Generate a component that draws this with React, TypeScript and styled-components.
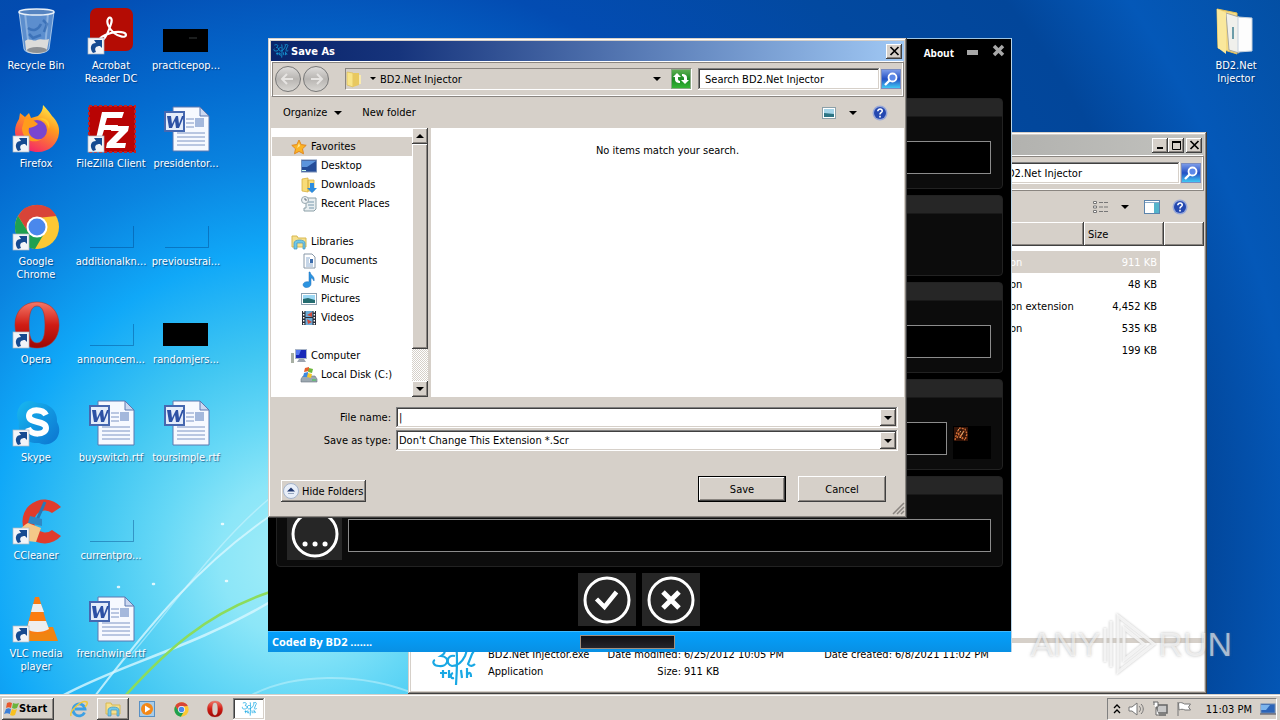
import React from "react";
import styled, { createGlobalStyle, css } from "styled-components";

const face = "#d6d0c9";
const ui = '"DejaVu Sans Condensed", "DejaVu Sans", sans-serif';

const GlobalStyle = createGlobalStyle`
  *, *::before, *::after { box-sizing: border-box; }
  body { margin: 0; font: 11px/13px ${ui}; color: #000; overflow: hidden; }
  button, input, select { font: inherit; color: inherit; margin: 0; padding: 0; border: 0; border-radius: 0; outline: 0; background: none; }
  ul { list-style: none; margin: 0; padding: 0; }
  svg { display: block; flex: none; }
`;

const raised = css`
  background: ${face};
  box-shadow: inset -1px -1px #404040, inset 1px 1px #fff, inset -2px -2px #8a8580;
`;
const sunken = css`
  box-shadow: inset -1px -1px #fff, inset 1px 1px #808080, inset -2px -2px ${face}, inset 2px 2px #404040;
`;

/* ---------- desktop ---------- */

const Screen = styled.div`
  display: flex;
  flex-direction: column;
  min-height: 100vh;
  background: #0450a8;
`;
const Workspace = styled.main`
  position: relative;
  flex: 1;
  display: flex;
  justify-content: space-between;
  align-items: flex-start;
  padding: 8px 8px 0 0;
  overflow: hidden;
  background: radial-gradient(circle at 300px 560px, #a4eef8 0, #8ce6f8 80px, #66d8f6 140px, #40c6f2 210px, #10a8f8 310px, #0a84e0 400px, #046cd0 480px, #034cb2 600px, #0249a0 760px, #02469a 900px, #0458b8 1000px, #034c9c 1180px);
`;
const Streaks = styled.svg`
  position: absolute;
  left: 0;
  bottom: 0;
`;
const IconGrid = styled.div`
  position: relative;
  display: grid;
  grid-template-columns: repeat(3, 72px);
  grid-template-rows: repeat(7, 98px);
  grid-auto-flow: column;
  column-gap: 3px;
`;
const Shortcut = styled.button`
  display: flex;
  flex-direction: column;
  align-items: center;
  gap: 3px;
  width: 72px;
  height: 98px;
  color: #fff;
  text-shadow: 1px 1px 1px rgba(0, 30, 80, 0.6);
  white-space: nowrap;
`;
const ShortcutLabel = styled.span`
  white-space: pre;
  text-align: center;
`;

/* ---------- window parts ---------- */

const Frame = styled.section`
  position: absolute;
  display: flex;
  flex-direction: column;
  padding: 3px;
  background: ${face};
  box-shadow: inset -1px -1px #404040, inset 1px 1px ${face}, inset -2px -2px #8a8580, inset 2px 2px #fff;
`;
const ExplorerFrame = styled(Frame)`
  left: 408px;
  right: 73px;
  top: 132px;
  bottom: 0;
`;
const DialogFrame = styled(Frame)`
  left: 268px;
  top: 38px;
  width: 639px;
`;
const TitleBar = styled.header<{ $active?: boolean }>`
  display: flex;
  align-items: center;
  justify-content: flex-end;
  height: 20px;
  padding: 0 2px;
  color: #fff;
  font-weight: bold;
  background: ${(p) => (p.$active ? "linear-gradient(90deg, #0a246a, #16347c 20%, #a0c8f4)" : "linear-gradient(90deg, #808080, #c2c2be)")};
`;
const TitleText = styled.h1`
  flex: 1;
  margin: 0 0 0 2px;
  font: bold 11px/13px ${ui};
`;
const CaptionButton = styled.button<{ $gap?: boolean }>`
  ${raised}
  display: grid;
  place-items: center;
  width: 16px;
  height: 15px;
  margin-left: ${(p) => (p.$gap ? "2px" : "0")};
`;
const NavBar = styled.div`
  display: flex;
  align-items: center;
  height: 36px;
  padding: 0 2px 0 3px;
  border: 1px solid #8a8580;
  border-top-color: #fff;
  border-left-color: #fff;
  box-shadow: inset 1px 1px #8a8580, inset -1px -1px #fff;
`;
const NavPair = styled.div`
  display: flex;
  gap: 2px;
  margin-right: 16px;
`;
const RoundNav = styled.button`
  display: grid;
  place-items: center;
  width: 26px;
  height: 26px;
  border: 1px solid #777;
  border-radius: 50%;
  background: linear-gradient(#dedcda, #b8b5b2 50%, #d8d6d2);
`;
const Address = styled.div`
  flex: 1;
  display: flex;
  align-items: center;
  height: 22px;
  border: 1px solid #fff;
  border-top-color: #8a8580;
  border-left-color: #8a8580;
`;
const AddressText = styled.span`
  flex: 1;
  margin-left: 4px;
`;
const SquareButton = styled.button<{ $green?: boolean }>`
  display: grid;
  place-items: center;
  width: 20px;
  height: 20px;
  border: 1px solid ${(p) => (p.$green ? "#8aa884" : "#7a8cc0")};
  background: ${(p) =>
    p.$green ? "linear-gradient(#5cae50, #1c8c24 50%, #34b434)" : "linear-gradient(#7a9ae8, #2450c4 50%, #40c8f4)"};
`;
const Search = styled.input`
  ${sunken}
  height: 22px;
  width: ${(p) => (p.width ? p.width + "px" : "182px")};
  margin: 0 1px 0 6px;
  padding: 0 7px;
  background: #fff;
  &::placeholder { color: #000; opacity: 1; }
`;
const ToolBar = styled.div`
  display: flex;
  align-items: center;
  height: 31px;
  padding: 0 16px 0 12px;
`;
const ToolButton = styled.button<{ $left?: number }>`
  display: flex;
  align-items: center;
  gap: 7px;
  margin-left: ${(p) => p.$left ?? 0}px;
`;
const Spacer = styled.span`
  flex: 1;
`;

/* ---------- save dialog ---------- */

const Panes = styled.div`
  display: flex;
  height: 269px;
`;
const TreePane = styled.nav`
  width: 141px;
  padding-top: 9px;
  background: #fff;
`;
const TreeRow = styled.li<{ $child?: boolean; $selected?: boolean; $first?: boolean }>`
  margin: ${(p) => (p.$first ? "19px 0 0 1px" : "0 0 0 1px")};
  background: ${(p) => (p.$selected ? face : "none")};
  button {
    display: flex;
    align-items: center;
    gap: 4px;
    height: 19px;
    padding-left: ${(p) => (p.$child ? "29px" : "19px")};
  }
`;
const ScrollBar = styled.div`
  display: flex;
  flex-direction: column;
  width: 16px;
  background: repeating-conic-gradient(#fff 0 25%, ${face} 0 50%) 0 0 / 2px 2px;
`;
const ScrollButton = styled.button`
  ${raised}
  display: grid;
  place-items: center;
  width: 16px;
  height: 16px;
`;
const Thumb = styled.div`
  ${raised}
  height: 205px;
  margin-bottom: auto;
`;
const FilePane = styled.div`
  flex: 1;
  margin-left: 3px;
  padding-top: 16px;
  text-align: center;
  background: #fff;
`;
const Form = styled.form`
  display: flex;
  flex-direction: column;
  gap: 2px;
  padding: 10px 6px 0 0;
`;
const Field = styled.div`
  display: grid;
  grid-template-columns: 120px 1fr;
  column-gap: 5px;
  align-items: center;
  label { text-align: right; }
`;
const Combo = styled.div`
  ${sunken}
  position: relative;
  display: flex;
  height: 21px;
  padding: 2px;
  background: #fff;
  input, select {
    flex: 1;
    min-width: 0;
    padding-left: 1px;
    appearance: none;
  }
`;
const ComboArrow = styled.span`
  ${raised}
  display: grid;
  place-items: center;
  width: 16px;
  pointer-events: none;
`;
const Actions = styled.div`
  display: flex;
  align-items: flex-end;
  gap: 12px;
  padding: 23px 12px 0 10px;
`;
const HideButton = styled.button`
  ${raised}
  display: flex;
  align-items: center;
  gap: 3px;
  height: 22px;
  padding: 0 3px 0 2px;
`;
const PushButton = styled.button<{ $primary?: boolean }>`
  ${raised}
  width: 88px;
  height: 26px;
  border: ${(p) => (p.$primary ? "1px solid #000" : "0")};
`;
const Grip = styled.div`
  display: flex;
  justify-content: flex-end;
`;

/* ---------- injector window ---------- */

const Injector = styled.section`
  position: absolute;
  left: 268px;
  top: 38px;
  width: 744px;
  display: flex;
  flex-direction: column;
  background: #000;
  border-top: 1px solid #9cc4e4;
  border-right: 1px solid #b8d4e8;
`;
const InjectorTop = styled.header`
  display: flex;
  justify-content: flex-end;
  align-items: flex-start;
  gap: 13px;
  height: 59px;
  padding: 6px 5px 0;
  color: #fff;
`;
const AboutLink = styled.a`
  margin-top: 1px;
  color: #fff;
  font: bold 10px/14px "Open Sans", sans-serif;
  text-decoration: none;
`;
const Groups = styled.div`
  display: flex;
  flex-direction: column;
  gap: 6px;
  padding: 0 8px;
`;
const Group = styled.div<{ $short?: boolean }>`
  height: ${(p) => (p.$short ? 81 : 91)}px;
  border: 1px solid #222;
  border-radius: 4px;
  background: linear-gradient(#262626 17px, #0c0c0c 18px);
  overflow: hidden;
`;
const GroupRow = styled.div`
  display: flex;
  gap: 6px;
  margin: 30px 11px 0 10px;
`;
const TileButton = styled.button<{ $wide?: boolean }>`
  display: grid;
  place-items: center;
  width: ${(p) => (p.$wide ? 58 : 55)}px;
  height: 53px;
  background: #262626;
`;
const DarkInput = styled.input`
  flex: 1;
  height: 33px;
  margin-top: 12px;
  border: 1px solid #8c8c8c;
  background: #000;
  color: #fff;
`;
const Preview = styled.div`
  width: 38px;
  height: 33px;
  margin-top: 16px;
  background: #000;
`;
const Confirm = styled.div`
  display: flex;
  justify-content: center;
  gap: 6px;
  padding: 6px 2px 5px 0;
`;
const StatusBar = styled.footer`
  position: relative;
  display: grid;
  grid-template-columns: 1fr 95px 1fr;
  align-items: center;
  height: 21px;
  padding: 0 28px 0 4px;
  border-top: 1px solid #40b8fc;
  background: linear-gradient(#04a0fc, #0890e4);
  color: #fff;
  font: bold 11px/16px "Open Sans", sans-serif;
`;
const Progress = styled.div`
  height: 14px;
  border: 1px solid #a09080;
  background: linear-gradient(#101012, #26242a);
`;

/* ---------- explorer window ---------- */

const FileArea = styled.div`
  flex: 1;
  background: #fff;
`;
const Files = styled.table`
  width: 100%;
  border-collapse: separate;
  border-spacing: 0;
  table-layout: fixed;
  th {
    height: 24px;
    padding: 0 4px;
    text-align: left;
    font-weight: normal;
    ${raised}
  }
  td { height: 22px; padding: 0 3px; white-space: nowrap; }
  tbody::before { content: ""; display: block; height: 5px; }
`;
const FileRow = styled.tr<{ $selected?: boolean }>`
  color: ${(p) => (p.$selected ? "#fff" : "#000")};
  td:not(:last-child) { background: ${(p) => (p.$selected ? face : "none")}; background-clip: padding-box; }
  td:nth-child(3) { text-align: right; border-right: 4px solid transparent; }
`;
const Details = styled.div`
  display: flex;
  align-items: flex-start;
  gap: 11px;
  height: 53px;
  padding: 3px 0 0 20px;
  border-top: 5px solid ${face};
  background: #fff;
`;
const DetailGrid = styled.div`
  display: grid;
  grid-template-columns: 117px 79px 131px 80px auto;
  line-height: 17px;
  white-space: nowrap;
`;
const Caption = styled.span`
  padding-right: 3px;
  text-align: right;
`;

/* ---------- watermark and task bar ---------- */

const Watermark = styled.div`
  position: absolute;
  right: 48px;
  bottom: 18px;
  display: flex;
  align-items: center;
  color: rgba(255, 255, 255, 0.6);
  font: 34px/64px "Liberation Sans Narrow", "Liberation Sans", sans-serif;
  text-shadow: 0 0 3px rgba(120, 120, 120, 0.5);
`;
const TaskBar = styled.footer`
  display: flex;
  align-items: center;
  height: 28px;
  padding: 2px 3px 0 2px;
  background: ${face};
  box-shadow: inset 0 1px ${face}, inset 0 2px #fff;
`;
const StartButton = styled.button`
  ${raised}
  display: flex;
  align-items: center;
  width: 52px;
  height: 22px;
  padding-left: 2px;
  font: bold 11px/16px ${ui};
`;
const Launchers = styled.div`
  display: flex;
  align-items: center;
  gap: 2px;
  margin-left: 9px;
`;
const TaskButton = styled.button<{ $state?: "open" | "active" }>`
  display: grid;
  place-items: center;
  width: 32px;
  height: 22px;
  ${(p) => p.$state === "open" && raised}
  ${(p) => p.$state === "active" && css`background: #fff; ${sunken}`}
`;
const Tray = styled.div`
  display: flex;
  align-items: center;
  gap: 8px;
  height: 22px;
  margin-left: auto;
  padding: 0 0 0 6px;
  border: 1px solid #fff;
  border-top-color: #808080;
  border-left-color: #808080;
`;
const Clock = styled.time`
  margin: 0 0 0 6px;
`;

/* ---------- drawings ---------- */

const Svg = ({ s = 16, w, h, vb, children }: { s?: number; w?: number; h?: number; vb?: string; children: React.ReactNode }) => (
  <svg width={w ?? s} height={h ?? s} viewBox={vb ?? `0 0 ${w ?? s} ${h ?? s}`} overflow="visible" aria-hidden="true">
    {children}
  </svg>
);

const Down = () => <Svg w={8} h={4}><path d="M0 0h8L4 4z" /></Svg>;
const Cross = () => <Svg w={9} h={8}><path d="M.5 0l8 8M8.500 0l-8 8" stroke="#000" strokeWidth="1.700" /></Svg>;

const Arrow = () => (
  <g>
    <rect x="1" y="30" width="16" height="16" fill="#f2f4f8" stroke="#b0b8c4" strokeWidth=".7" />
    <path d="M6 45c-4-5-2-10 3-10l-2-3h8v8l-2-2c-4 0-6 2-4 6z" fill="#164a90" />
  </g>
);

const RecycleBin = () => (
  <Svg s={48}>
    <path d="M7 4l5 37c1 6 23 6 25 0l5-37z" fill="#7fa8d8" fillOpacity=".72" stroke="#d4e6f6" strokeWidth=".7" />
    <path d="M13 5l4 36M36 5l-3 36" stroke="#d0e4f8" strokeWidth="2" opacity=".4" />
    <path d="M16 20c5 4 10 2 13-4M31 12l4 4-3 8M17 26l4 4 8-3" fill="none" stroke="#2860ac" strokeWidth="2.500" opacity=".6" />
    <path d="M13 33c5-4 8 1 12-1s8 1 12-1l-2 11c-3 5-19 5-21 0z" fill="#dcdcda" />
    <ellipse cx="25" cy="42" rx="10" ry="3" fill="#8c9094" />
    <ellipse cx="24.500" cy="4" rx="17.500" ry="3" fill="#5684c0" stroke="#e8f0f8" strokeWidth="1.500" />
  </Svg>
);
const Acrobat = () => (
  <Svg s={48}>
    <rect x="3" y="0" width="43" height="43" rx="7" fill="#b40c04" />
    <path d="M13 33c-2-3 4-6 11-8 7-2 15-1 15 2s-7 2-12-2-8-11-6-14 5-1 3 5-6 18-11 17z" fill="none" stroke="#fff" strokeWidth="2.200" />
    <Arrow />
  </Svg>
);
const Firefox = () => (
  <Svg s={48}>
    <defs>
      <linearGradient id="ff" x1=".8" y1="0" x2=".3" y2="1">
        <stop offset="0" stopColor="#fff04c" /><stop offset=".4" stopColor="#ff9a20" /><stop offset="1" stopColor="#f4206c" />
      </linearGradient>
    </defs>
    <path d="M31-1c5 5 7 8 9 11 4 4 8 10 7 17-1 11-10 19-21 19C13 46 3 37 3 25c0-5 2-9 4-12l1-6 5 4 4-4 2 5 7-2c3-3 5-6 5-11z" fill="url(#ff)" />
    <circle cx="25" cy="24" r="10" fill="#7846d0" />
    <path d="M13 12l8 2 5 4c-3 3-6 3-9 4-2 8 6 13 13 11-9 6-20 0-20-11z" fill="#ff9c1c" />
    <path d="M26 13c6 0 10 4 11 10 2-7-3-13-11-10z" fill="#ffc82c" />
    <Arrow />
  </Svg>
);
const FileZilla = () => (
  <Svg s={48}>
    <rect x="2" y="0" width="46" height="46" fill="#b80404" stroke="#c42020" strokeWidth="2" strokeDasharray="3 2" />
    <path d="M15 6h22l-2 6H20l-2 7h13l-1 5H17l-4 13H8z" fill="#fff" />
    <path d="M25 20h17l-1 5-12 12h10l-1 5H19l1-5 12-12h-8z" fill="#fff" />
    <Arrow />
  </Svg>
);
const ChromeMark = () => (
  <g>
    <circle cx="25" cy="23" r="22" fill="#fcc834" />
    <path d="M6 12a22 22 0 0 1 38.500 0L25 14l-9 14z" fill="#d84438" />
    <path d="M6 12a22 22 0 0 0 17 33l10-17-17 0z" fill="#1ea050" />
    <circle cx="25" cy="23" r="10.500" fill="#fff" />
    <circle cx="25" cy="23" r="8.500" fill="#4a88ec" />
  </g>
);
const OperaMark = () => (
  <g>
    <defs>
      <linearGradient id="op" x1="0" y1="0" x2="0" y2="1">
        <stop offset="0" stopColor="#f47868" /><stop offset=".5" stopColor="#d01c14" /><stop offset="1" stopColor="#9c0804" />
      </linearGradient>
    </defs>
    <path fillRule="evenodd" d="M25 0c13 0 22 9 22 23S38 46 25 46 3 37 3 23 12 0 25 0zm0 4c-6 0-8 8-8 19s2 18 8 18 8-7 8-18-2-19-8-19z" fill="url(#op)" stroke="#b03028" strokeWidth=".6" />
  </g>
);
const Skype = () => (
  <Svg s={48}>
    <defs>
      <linearGradient id="sk" x1="0" y1="0" x2="1" y2="1"><stop offset="0" stopColor="#18b8f0" /><stop offset="1" stopColor="#0c74d0" /></linearGradient>
    </defs>
    <path d="M17 1c5 0 7 2 10 2 11 0 19 9 18 19 3 5 3 11 0 16-4 6-12 8-18 5C14 44 5 35 7 22 2 13 8 1 17 1z" fill="url(#sk)" />
    <path d="M34 15c-3-6-17-7-17 1s17 4 17 12c0 7-15 8-18 0" fill="none" stroke="#fff" strokeWidth="6" />
    <Arrow />
  </Svg>
);
const CCleaner = () => (
  <Svg s={48}>
    <path d="M49 9A22 22 0 1 0 49 38l-9-6a11 11 0 1 1 0-17z" fill="#e03c2c" />
    <path d="M33 4l-8 18" stroke="#2878b4" strokeWidth="3" />
    <path d="M18 18l12 3v7l-14-3z" fill="#2f88c4" />
    <path d="M16 25l13 5-5 14-17-2C2 42 6 30 16 25z" fill="#f4c888" />
    <Arrow />
  </Svg>
);
const Vlc = () => (
  <Svg s={48}>
    <path d="M13 31h28l5 14H8z" fill="#f08410" />
    <path d="M23 1h4l10 34c-5 4-19 4-23 0z" fill="#fb7c10" />
    <path d="M21 8h8l3 8H19zM17 25h17l3 8c-6 4-17 4-22 0z" fill="#eee" />
    <Arrow />
  </Svg>
);
const Chrome = () => <Svg s={48}><ChromeMark /><Arrow /></Svg>;
const Opera = () => <Svg s={48}><OperaMark /><Arrow /></Svg>;
const WordDoc = () => (
  <Svg s={48}>
    <path d="M11 1h27l9 9v35H11z" fill="#f6f9ff" stroke="#5c78b0" />
    <path d="M38 1v9h9z" fill="#ccd8f0" stroke="#5c78b0" />
    <path d="M24 13h8M24 17h8M24 21h8M15 27h28M15 31h28M15 35h28M15 39h28" stroke="#7c94c4" />
    <rect x="33" y="12" width="9" height="9" fill="#a4b8dc" />
    <rect x="3" y="6" width="19" height="19" fill="#e4ecfa" stroke="#4668b0" strokeWidth="2" />
    <path d="M5 10h4l1 8 4-8h2l1 8 3-8h2l-5 12h-3l-1-7-3 7H7z" fill="#2c50a4" />
  </Svg>
);
const BlackThumb = ({ mark }: { mark?: boolean }) => (
  <Svg s={48}><rect x="1" y="21" width="45" height="23" fill="#000" />{mark && <path d="M27 30h8" stroke="#383c3c" />}</Svg>
);
const ClearThumb = () => <Svg s={48}><path d="M3 43.500h43.500V22" fill="none" stroke="#003c80" strokeOpacity=".4" /></Svg>;
const OpenFolder = () => (
  <Svg s={48}>
    <path d="M5 1l20 4v41L6 40z" fill="#f6dc84" stroke="#e4c058" />
    <path d="M14 5l13 4v36l-10-3z" fill="#f0f0ec" stroke="#a8a8a0" />
    <path d="M26 9l14 1v33l-14 1z" fill="#fdfdfd" stroke="#c4d0dc" />
    <path d="M21 19v12" stroke="#6c9ca8" strokeWidth="2" />
    <path d="M5 1l9 4v41L6 40z" fill="#fae89c" />
  </Svg>
);
const Scribble = ({ w = 46, h = 40 }: { w?: number; h?: number }) => (
  <Svg w={w} h={h} vb="0 0 46 40">
    <path d="M4 3c10-4 13 3 6 7 10 1 7 11-2 10-6 0-7-5-4-6M25 1c2 8 1 20 0 38M24 10c-9-2-9 9-3 10 5 0 10-4 13-10 2-5 2-8 0-9M35 3c6-4 10 0 6 5l-4 10c2 3 5 2 7 0M12 24v8M9 27h7M18 24v8M22 27c-3 1-3 6 1 5M30 24l1 8M36 22v10M36 29c2-3 4-3 4 2" fill="none" stroke="#18a8e4" strokeWidth="2.200" />
  </Svg>
);

const Star = () => <Svg><path d="M8 1l2.200 4.600 5 .7-3.700 3.500 1 5L8 12.400l-4.500 2.400 1-5L.8 6.300l5-.7z" fill="#fcb424" stroke="#e08820" /><path d="M8 4l1 3-3 2z" fill="#ffe898" /></Svg>;
const DesktopIcon = () => <Svg><rect x=".5" y="2" width="15" height="12" fill="#244c98" stroke="#7890b8" /><path d="M1 3h14l-9 6H1z" fill="#5c94dc" /><path d="M1 12.500h4" stroke="#cfe" /></Svg>;
const DownloadIcon = () => <Svg><path d="M1 2l6-1v14l-6-1zM7 3h6v11H7z" fill="#f8dc78" stroke="#d8b040" strokeWidth=".8" /><path d="M9 6h4v5h3l-5 5-5-5h3z" fill="#2c8ce0" /></Svg>;
const RecentIcon = () => <Svg><path d="M5 2h10v11l-2 2H3v-3h2z" fill="#e8eef0" stroke="#8ca0a8" /><path d="M7 6h6M7 9h6M8 12h5" stroke="#7898ac" /><circle cx="4" cy="4" r="3.500" fill="#eef2f4" stroke="#98a8b0" /><path d="M4 2v2h2" stroke="#456" fill="none" strokeWidth=".8" /></Svg>;
const LibraryIcon = () => <Svg><path d="M1 2h5l1 2h8v9H1z" fill="#f6e08c" stroke="#d8b850" /><path d="M3 15V9c0-4 11-4 11 0v6h-2V9H6v6z" fill="#70c8e8" stroke="#4494bc" strokeWidth=".7" /></Svg>;
const DocIcon = () => <Svg><path d="M3 1h8l3 3v11H3z" fill="#fff" stroke="#8898a8" /><path d="M5 5h4M5 7h3M5 9h3M5 11h7M5 13h7" stroke="#8cacd0" /><path d="M9 6h3v4H9z" fill="#3c6cac" /></Svg>;
const MusicIcon = () => <Svg><path d="M9 0c1 4 5 4 4 9-1-2-2-3-3-3v6c0 4-7 5-8 1 0-3 4-4 6-3V0z" fill="#2c94e0" stroke="#1c6cb8" strokeWidth=".5" /></Svg>;
const PictureIcon = () => <Svg><rect x=".5" y="2.500" width="15" height="11" fill="#fff" stroke="#8ca0b0" /><path d="M2 4h12v8H2z" fill="#9cd8f4" /><path d="M2 8l5-1 7 2v3H2z" fill="#246c70" /></Svg>;
const VideoIcon = () => <Svg><rect x="1" y="1" width="14" height="14" fill="#282c38" /><path d="M4.500 1h7v6h-7zM4.500 8h7v7h-7z" fill="#6cacd8" /><path d="M11 2l-5 3 5 2zM6 9l5 3-4 2z" fill="#d04c3c" /><path d="M2.700 1v14M13.300 1v14" stroke="#fff" strokeWidth="1.400" strokeDasharray="1.500 1.500" /></Svg>;
const ComputerIcon = () => <Svg><path d="M0 5h3v10H0z" fill="#a8b0a4" /><rect x="4.500" y="1.500" width="11" height="9" fill="#1828b8" stroke="#a8b4c8" /><path d="M5 2h5l-2 5H5z" fill="#5478f0" /><path d="M8 11h5l2 3H6z" fill="#9ca4b0" /></Svg>;
const DiskIcon = () => <Svg><path d="M2 9h12l2 3v3H0v-3z" fill="#9ca8b0" stroke="#687480" strokeWidth=".6" /><path d="M4 1l4-1v4L3 5z" fill="#e8602c" /><path d="M8 1l4 1-1 4-4-1z" fill="#70b83c" /><path d="M3 6l4-1v5H2z" fill="#3c88e0" /><path d="M7 6l4 1-1 4-4-1z" fill="#f8c828" /><path d="M11 13h4" stroke="#38d048" /></Svg>;

const Magnifier = () => <Svg><circle cx="9.500" cy="6.500" r="4" fill="#5c88e8" stroke="#fff" strokeWidth="1.800" /><path d="M6.500 9.500L2 14" stroke="#fff" strokeWidth="2.400" /></Svg>;
const Refresh = () => (
  <Svg>
    <path d="M0 6l4-4 4 4H5v2c0 1 1 2 2 2v2c-3 0-5-1-5-4V6z" fill="#fff" />
    <path d="M16 9l-4 4-4-4h3V7c0-1-1-2-2-2V3c3 0 5 1 5 4v2z" fill="#fff" />
  </Svg>
);
const Help = () => (
  <Svg>
    <circle cx="8" cy="8" r="7.500" fill="#98a8d8" />
    <circle cx="8" cy="8" r="6" fill="#2448b0" />
    <path d="M5.800 6.200c0-3 4.800-2.800 4.400 0-.3 1.600-2.200 1.500-2.200 3.200M8 10.800v1.700" fill="none" stroke="#fff" strokeWidth="1.600" />
  </Svg>
);
const ViewIcon = () => <Svg w={14} h={16}><rect x=".5" y="2.500" width="13" height="11" fill="#fff" stroke="#8ca0a8" /><path d="M2 4h10v8H2z" fill="#a4d4e8" /><path d="M2 8l10 1v3H2z" fill="#2c7484" /></Svg>;
const ListIcon = () => <Svg><path d="M.5 2.500h3v2h-3zM.5 7h3v2h-3zM.5 11.500h3v2h-3z" fill="#fff" stroke="#777" /><path d="M6 3.500h9M6 8h9M6 12.500h9" stroke="#777" strokeDasharray="4 1" /></Svg>;
const PreviewIcon = () => <Svg><rect x=".5" y="1.500" width="15" height="13" fill="#fff" stroke="#5c84ac" /><path d="M10 4h5v10h-5z" fill="#54b4cc" /><path d="M1 3.500h14" stroke="#88a8c8" /></Svg>;
const Fold = () => <Svg><circle cx="8" cy="8" r="7.500" fill="#e8eef8" stroke="#a4b4cc" /><path d="M4 8.500l4-4 4 4z" fill="#203870" /><path d="M5 10.500h6" stroke="#98a8c0" /></Svg>;

const Ring = ({ kind }: { kind: "dots" | "check" | "cross" }) => (
  <Svg s={48}>
    <circle cx="24" cy="24" r="22" fill="none" stroke="#fff" strokeWidth="3" />
    {kind === "dots" && <path d="M14 34h.1M24 34h.1M34 34h.1" stroke="#fff" strokeWidth="5" strokeLinecap="round" />}
    {kind === "check" && <path d="M13.500 23l8 8 12-15" fill="none" stroke="#fff" strokeWidth="4.500" />}
    {kind === "cross" && <path d="M16 16l16 16M32 16L16 32" stroke="#fff" strokeWidth="5" />}
  </Svg>
);

const WinFlag = () => (
  <Svg w={15} h={16} vb="1 0 15 16">
    <path d="M4 2c2-1 3-1 5 0L8 7c-2-1-3-1-5 0z" fill="#e8582c" />
    <path d="M10 2c2 1 4 1 6 0l-2 5c-2 1-3 1-5 0z" fill="#6cb43c" />
    <path d="M3 8c2-1 3-1 5 0l-1 5c-2-1-4-1-6 0z" fill="#3c80d8" />
    <path d="M9 8c2 1 3 1 5 0l-2 6c-2 1-3 1-5 0z" fill="#f8c020" />
  </Svg>
);
const InternetE = () => (
  <Svg s={18}>
    <path d="M14.500 12.500A6 6 0 1 1 15 9H5" fill="none" stroke="#3ca0e4" strokeWidth="2.800" />
    <path d="M1 16C-1 11 12-1 17 2c1 2-1 4-2 5" fill="none" stroke="#f0c838" strokeWidth="1.500" />
  </Svg>
);
const Player = () => <Svg><rect x=".5" y=".5" width="15" height="15" fill="#a8cce8" stroke="#5890c4" /><circle cx="8" cy="8" r="6" fill="#f48818" /><path d="M6 4.500v7L11.500 8z" fill="#fff" /></Svg>;

/* ---------- data ---------- */

const shortcuts: [string, React.ReactNode][] = [
  ["Recycle Bin", <RecycleBin />],
  ["Firefox", <Firefox />],
  ["Google\nChrome", <Chrome />],
  ["Opera", <Opera />],
  ["Skype", <Skype />],
  ["CCleaner", <CCleaner />],
  ["VLC media\nplayer", <Vlc />],
  ["Acrobat\nReader DC", <Acrobat />],
  ["FileZilla Client", <FileZilla />],
  ["additionalkn...", <ClearThumb />],
  ["announcem...", <ClearThumb />],
  ["buyswitch.rtf", <WordDoc />],
  ["currentpro...", <ClearThumb />],
  ["frenchwine.rtf", <WordDoc />],
  ["practicepop...", <BlackThumb mark />],
  ["presidentor...", <WordDoc />],
  ["previoustrai...", <ClearThumb />],
  ["randomjers...", <BlackThumb />],
  ["toursimple.rtf", <WordDoc />],
];

const tree: [string, React.ReactNode, boolean][] = [
  ["Favorites", <Star />, false],
  ["Desktop", <DesktopIcon />, true],
  ["Downloads", <DownloadIcon />, true],
  ["Recent Places", <RecentIcon />, true],
  ["Libraries", <LibraryIcon />, false],
  ["Documents", <DocIcon />, true],
  ["Music", <MusicIcon />, true],
  ["Pictures", <PictureIcon />, true],
  ["Videos", <VideoIcon />, true],
  ["Computer", <ComputerIcon />, false],
  ["Local Disk (C:)", <DiskIcon />, true],
];

const files: [string, string][] = [
  ["Application", "911 KB"],
  ["Application", "48 KB"],
  ["Application extension", "4,452 KB"],
  ["Application", "535 KB"],
  ["", "199 KB"],
];

/* ---------- windows ---------- */

const Explorer = () => (
  <ExplorerFrame aria-label="Explorer">
    <TitleBar>
      <CaptionButton aria-label="Minimize"><Svg w={8} h={8}><path d="M1 6h6v2H1z" /></Svg></CaptionButton>
      <CaptionButton aria-label="Maximize"><Svg w={9} h={9}><path d="M.5 1h8v7.500h-8z" fill="none" stroke="#000" /><path d="M0 0h9v2H0z" /></Svg></CaptionButton>
      <CaptionButton aria-label="Close" $gap><Cross /></CaptionButton>
    </TitleBar>
    <NavBar>
      <Spacer />
      <Search width={224} aria-label="Search folder" placeholder="Search BD2.Net Injector" />
      <SquareButton aria-label="Search"><Magnifier /></SquareButton>
    </NavBar>
    <ToolBar>
      <Spacer />
      <ToolButton aria-label="View"><ListIcon /></ToolButton>
      <ToolButton $left={12} aria-label="More views"><Down /></ToolButton>
      <ToolButton $left={15} aria-label="Preview pane"><PreviewIcon /></ToolButton>
      <ToolButton $left={12} aria-label="Help"><Help /></ToolButton>
    </ToolBar>
    <FileArea>
      <Files>
        <colgroup><col /><col width="120" /><col width="80" /><col width="40" /></colgroup>
        <thead><tr><th aria-label="Name" /><th aria-label="Type" /><th>Size</th><th aria-label="Other" /></tr></thead>
        <tbody>
          {files.map(([type, size], i) => (
            <FileRow key={i} $selected={i === 0}><td /><td>{type}</td><td>{size}</td><td /></FileRow>
          ))}
        </tbody>
      </Files>
    </FileArea>
    <Details>
      <Scribble />
      <DetailGrid>
        <span>BD2.Net Injector.exe</span><Caption>Date modified:</Caption><span>6/25/2012 10:05 PM</span><Caption>Date created:</Caption><span>6/8/2021 11:02 PM</span>
        <span>Application</span><Caption>Size:</Caption><span>911 KB</span>
      </DetailGrid>
    </Details>
  </ExplorerFrame>
);

const FilePicker = ({ name, children }: { name: string; children?: React.ReactNode }) => (
  <Group>
    <GroupRow>
      <TileButton aria-label={`Browse ${name}`}><Ring kind="dots" /></TileButton>
      <DarkInput aria-label={name} />
      {children}
    </GroupRow>
  </Group>
);

const InjectorWindow = () => (
  <Injector aria-label="Injector">
    <InjectorTop>
      <AboutLink href="#about">About</AboutLink>
      <button aria-label="Minimize"><Svg w={11} h={15}><path d="M0 5h11v5H0z" fill="#a8a8a8" /></Svg></button>
      <button aria-label="Close"><Svg w={15} h={12}><path d="M3 1l9 9M12 1l-9 9" stroke="#a8a8a8" strokeWidth="3.500" /></Svg></button>
    </InjectorTop>
    <Groups>
      <FilePicker name="First file" />
      <Group $short />
      <FilePicker name="Second file" />
      <FilePicker name="Icon file">
        <Preview>
          <Svg><path d="M1 1h14v14H1z" fill="#341408" /><path d="M2 14l2-8 3-4 5 1 2 5-2 6M5 7l5 5M11 5l-4 6 5 3M4 12l3-6" fill="none" stroke="#d06c34" strokeWidth="1.400" strokeDasharray="2 1" /><path d="M5 3l6 6M7 12l4-8" stroke="#e8d8a0" strokeDasharray="1 2" /></Svg>
        </Preview>
      </FilePicker>
      <FilePicker name="Output file" />
    </Groups>
    <Confirm>
      <TileButton $wide aria-label="Accept"><Ring kind="check" /></TileButton>
      <TileButton $wide aria-label="Reject"><Ring kind="cross" /></TileButton>
    </Confirm>
    <StatusBar><span>Coded By BD2 .......</span><Progress /></StatusBar>
  </Injector>
);

const SaveDialog = () => (
  <DialogFrame role="dialog" aria-label="Save As">
    <TitleBar $active>
      <Scribble w={16} h={14} />
      <TitleText>Save As</TitleText>
      <CaptionButton aria-label="Close"><Cross /></CaptionButton>
    </TitleBar>
    <NavBar>
      <NavPair>
        <RoundNav aria-label="Back"><Svg><path d="M7 3L2 8l5 5M2 8h11" fill="none" stroke="#e6e4e2" strokeWidth="2" /></Svg></RoundNav>
        <RoundNav aria-label="Forward"><Svg><path d="M9 3l5 5-5 5M14 8H3" fill="none" stroke="#e6e4e2" strokeWidth="2" /></Svg></RoundNav>
      </NavPair>
      <Address>
        <Svg><path d="M1 1l6 1v14l-6-2z" fill="#f8e488" stroke="#dcbc58" strokeWidth=".7" /><path d="M7 2h6v12l-6 2z" fill="#e8c860" /><path d="M13 4h2v9h-2z" fill="#f8eab0" /></Svg>
        <Svg w={14} h={4}><path d="M8 0h6l-3 3z" /></Svg>
        <AddressText>BD2.Net Injector</AddressText>
        <ToolButton aria-label="Previous locations"><Down /></ToolButton>
        <Svg w={10} h={1}><path d="" /></Svg>
        <SquareButton $green aria-label="Refresh"><Refresh /></SquareButton>
      </Address>
      <Search aria-label="Search folder" placeholder="Search BD2.Net Injector" />
      <SquareButton aria-label="Search"><Magnifier /></SquareButton>
    </NavBar>
    <ToolBar>
      <ToolButton>Organize <Down /></ToolButton>
      <ToolButton $left={20}>New folder</ToolButton>
      <Spacer />
      <ToolButton aria-label="View"><ViewIcon /></ToolButton>
      <ToolButton $left={13} aria-label="More views"><Down /></ToolButton>
      <ToolButton $left={15} aria-label="Help"><Help /></ToolButton>
    </ToolBar>
    <Panes>
      <TreePane aria-label="Folders">
        <ul>
          {tree.map(([name, icon, child], i) => (
            <TreeRow key={name} $child={child} $selected={i === 0} $first={!child && i > 0}>
              <button>{icon}{name}</button>
            </TreeRow>
          ))}
        </ul>
      </TreePane>
      <ScrollBar>
        <ScrollButton aria-label="Scroll up"><Svg w={8} h={4}><path d="M0 4h8L4 0z" /></Svg></ScrollButton>
        <Thumb />
        <ScrollButton aria-label="Scroll down"><Down /></ScrollButton>
      </ScrollBar>
      <FilePane>No items match your search.</FilePane>
    </Panes>
    <Form onSubmit={(e) => e.preventDefault()}>
      <Field>
        <label htmlFor="file-name">File name:</label>
        <Combo><input id="file-name" defaultValue="|" /><ComboArrow><Down /></ComboArrow></Combo>
      </Field>
      <Field>
        <label htmlFor="file-type">Save as type:</label>
        <Combo><select id="file-type"><option>Don't Change This Extension *.Scr</option></select><ComboArrow><Down /></ComboArrow></Combo>
      </Field>
      <Actions>
        <HideButton type="button"><Fold />Hide Folders</HideButton>
        <Spacer />
        <PushButton $primary type="submit">Save</PushButton>
        <PushButton type="button">Cancel</PushButton>
      </Actions>
    </Form>
    <Grip><Svg w={12} h={13}><path d="M1 12L12 1M5 12l7-7M9 12l3-3" stroke="#8a8580" strokeWidth="1.500" /></Svg></Grip>
  </DialogFrame>
);

const App = () => (
  <Screen>
    <GlobalStyle />
    <Workspace>
      <Streaks width="480" height="260" viewBox="0 0 480 260" fill="none" aria-hidden="true">
        <path d="M62 262C120 230 190 215 270 168" stroke="#d8f8ff" strokeWidth="2.500" opacity=".8" />
        <path d="M95 262C150 190 200 130 270 82" stroke="#d8f8ff" strokeWidth="2" opacity=".8" />
        <path d="M130 222C175 170 215 110 270 64" stroke="#d8f8ff" strokeWidth="1.500" opacity=".5" />
        <path d="M125 262C165 218 205 180 270 158" stroke="#8cdc5c" strokeWidth="2.500" />
        <path d="M250 262C290 240 360 236 420 262" stroke="#c8f4fc" strokeWidth="2" opacity=".5" />
        <path d="M222 90h1M226 147h1M153 150h1M118 153h1" stroke="#fff" strokeWidth="2.500" strokeLinecap="round" opacity=".8" />
      </Streaks>
      <IconGrid>
        {shortcuts.map(([name, icon]) => (
          <Shortcut key={name}>{icon}<ShortcutLabel>{name}</ShortcutLabel></Shortcut>
        ))}
      </IconGrid>
      <Shortcut><OpenFolder /><ShortcutLabel>{"BD2.Net\nInjector"}</ShortcutLabel></Shortcut>
      <Explorer />
      <InjectorWindow />
      <SaveDialog />
      <Watermark>
        <span>ANY</span>
        <Svg w={58} h={64}><path d="M5 16v34M11 9v46M18 4l36 28-36 28zM24 16l20 16-20 16z" fill="none" stroke="#fff" strokeOpacity=".75" strokeWidth="3" style={{ filter: "drop-shadow(0 0 1px #aaa)" }} /></Svg>
        <span>RUN</span>
      </Watermark>
    </Workspace>
    <TaskBar>
      <StartButton><WinFlag />Start</StartButton>
      <Launchers>
        <TaskButton aria-label="Browser"><InternetE /></TaskButton>
        <TaskButton $state="open" aria-label="Files"><LibraryIcon /></TaskButton>
        <TaskButton aria-label="Media player"><Player /></TaskButton>
        <TaskButton aria-label="Chrome"><Svg w={15} h={15} vb="2 0 46 46"><ChromeMark /></Svg></TaskButton>
        <TaskButton aria-label="Opera"><Svg w={16} h={16} vb="2 0 46 46"><OperaMark /></Svg></TaskButton>
        <TaskButton $state="active" aria-label="Injector"><Scribble w={17} h={14} /></TaskButton>
      </Launchers>
      <Tray>
        <Svg w={6} h={10}><path d="M0 4l3-3 3 3M0 9l3-3 3 3" fill="none" stroke="#000" strokeWidth="1.300" /></Svg>
        <Svg w={16} h={16}><path d="M1 6h3l5-4v12l-5-4H1z" fill="#fff" stroke="#777" /><path d="M11 5c2 2 2 4 0 6M13 3c3 3 3 7 0 10" fill="none" stroke="#777" /></Svg>
        <Svg w={16} h={16}><path d="M5 4h10v8H5zM7 14h7" fill="#c8c8c8" stroke="#666" strokeWidth="1.500" /><path d="M1 1h5v5H4v8h3M2 1v3" fill="#fff" stroke="#666" /></Svg>
        <Svg w={16} h={16}><path d="M2 1v14M2.500 2c3-1 4 0 6 1h6l-2 3 2 3H9c-2-1-4-1-6 0z" fill="#fff" stroke="#777" /></Svg>
        <Clock>11:03 PM</Clock>
        <Svg w={16} h={16}><rect x="1" y="3" width="14" height="9" fill="#2c64b8" stroke="#6888b4" /><path d="M1 4h9l-4 5H1z" fill="#7cb4ec" /><path d="M0 13h16" stroke="#445" /></Svg>
      </Tray>
    </TaskBar>
  </Screen>
);

export default App;
